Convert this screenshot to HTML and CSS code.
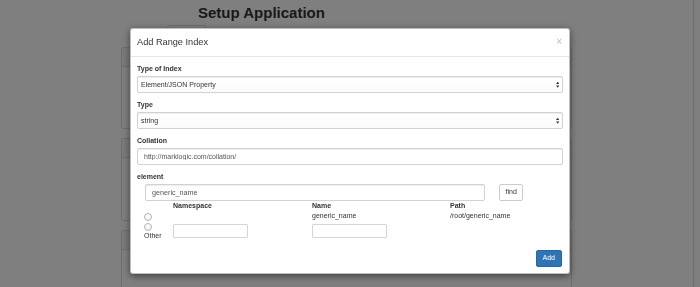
FILE: index.html
```html
<!DOCTYPE html>
<html lang="en">
<head>
<meta charset="utf-8">
<title>Setup Application</title>
<link rel="stylesheet" href="styles.css">
</head>
<body>
<div class="page">
  <div class="main">
    <h2 class="page-title">Setup Application</h2>
    <div class="tab"></div>
    <div class="panels">
      <div class="panel">
        <div class="panel-heading"></div>
        <div class="panel-body p1"></div>
      </div>
      <div class="panel">
        <div class="panel-heading"></div>
        <div class="panel-body p2"></div>
      </div>
      <div class="panel">
        <div class="panel-heading"></div>
        <div class="panel-body p3"></div>
      </div>
    </div>
  </div>
  <div class="rail"></div>
</div>

<div class="backdrop"></div>

<div class="modal" role="dialog" aria-labelledby="modal-title">
  <div class="modal-header">
    <h4 class="modal-title" id="modal-title">Add Range Index</h4>
    <button class="close" type="button" aria-label="Close">×</button>
  </div>
  <div class="modal-body">
    <div class="form-group">
      <label class="control-label">Type of Index</label>
      <div class="select-wrap">
        <select class="form-control select"><option>Element/JSON Property</option></select>
        <svg class="updown" viewBox="0 0 4 8" aria-hidden="true"><path d="M0 3.2 L2 0.6 L4 3.2 Z M0 4.8 L2 7.4 L4 4.8 Z" fill="#333"/></svg>
      </div>
    </div>
    <div class="form-group">
      <label class="control-label">Type</label>
      <div class="select-wrap">
        <select class="form-control select"><option>string</option></select>
        <svg class="updown" viewBox="0 0 4 8" aria-hidden="true"><path d="M0 3.2 L2 0.6 L4 3.2 Z M0 4.8 L2 7.4 L4 4.8 Z" fill="#333"/></svg>
      </div>
    </div>
    <div class="form-group">
      <label class="control-label">Collation</label>
      <input class="form-control" type="text" value="http://marklogic.com/collation/">
    </div>
    <div class="element-group">
      <label class="control-label">element</label>
      <div class="find-row">
        <input class="form-control find-input" type="text" value="generic_name">
        <button class="btn btn-default" type="button">find</button>
      </div>
      <div class="matches">
        <div class="cell"></div>
        <div class="cell th">Namespace</div>
        <div class="cell th">Name</div>
        <div class="cell th">Path</div>

        <div class="cell"><input class="radio" type="radio" name="match"></div>
        <div class="cell"></div>
        <div class="cell">generic_name</div>
        <div class="cell">/root/generic_name</div>

        <div class="cell"><input class="radio" type="radio" name="match"><span class="other">Other</span></div>
        <div class="cell"><input class="small-input" type="text"></div>
        <div class="cell"><input class="small-input" type="text"></div>
        <div class="cell"></div>
      </div>
    </div>
  </div>
  <div class="modal-footer">
    <button class="btn btn-primary" type="button">Add</button>
  </div>
</div>
</body>
</html>
```

FILE: styles.css
```css
* { box-sizing: border-box; }

html, body {
  margin: 0;
  height: 100%;
}

body {
  font-family: "Liberation Sans", Arial, sans-serif;
  color: #333;
  background: #fff;
  overflow: hidden;
}

/* ---------- page underneath ---------- */
.page {
  display: flex;
  height: 287px;
  overflow: hidden;
}

.main {
  width: 693px;
  padding-top: 4px;
  overflow: hidden;
}

.rail {
  flex: 1;
  border-left: 1px solid #ddd;
}

.page-title {
  margin: 0 0 0 198px;
  font-size: 15px;
  line-height: 18px;
  font-weight: bold;
  color: #333;
}

.tab {
  margin: 3px 0 0 167px;
  width: 40px;
  height: 20px;
  border: 1px solid #ddd;
  border-radius: 3px;
}

.panels {
  margin: 2px 0 0 121px;
  width: 451px;
}

.panel {
  border: 1px solid #ddd;
  border-radius: 2px;
  margin-bottom: 9px;
  background: #fff;
}

.panel-heading {
  height: 19px;
  background: #f5f5f5;
  border-bottom: 1px solid #ddd;
}

.p1 { height: 61px; }
.p2 { height: 62px; }
.p3 { height: 60px; }

/* ---------- backdrop + modal ---------- */
.backdrop {
  position: fixed;
  inset: 0;
  background: rgba(0, 0, 0, 0.5);
}

.modal {
  position: absolute;
  left: 130px;
  top: 28px;
  width: 440px;
  background: #fff;
  border: 1px solid rgba(0, 0, 0, 0.25);
  border-radius: 3px;
  box-shadow: 0 2px 7px rgba(0, 0, 0, 0.5);
  font-size: 7px;
  line-height: 10px;
  color: #333;
}

.modal-header {
  display: flex;
  justify-content: space-between;
  align-items: center;
  padding: 7px 7px 7px 6px;
  border-bottom: 1px solid #e5e5e5;
}

.modal-title {
  margin: 0;
  font-size: 9.2px;
  font-weight: normal;
  line-height: 12.5px;
}

.close {
  border: 0;
  background: none;
  padding: 0;
  font: bold 10px/1 "Liberation Sans", Arial, sans-serif;
  color: #000;
  opacity: 0.2;
}

.modal-body {
  padding: 7px 6px 7px 6px;
}

.control-label {
  display: block;
  font-weight: bold;
  margin-bottom: 2.5px;
}

.form-group {
  margin-bottom: 7px;
}

.form-control {
  display: block;
  width: 100%;
  height: 16.5px;
  padding: 0 6px;
  font: 7px/15px "Liberation Sans", Arial, sans-serif;
  color: #555;
  background: #fff;
  border: 1px solid #d2d2d2;
  border-radius: 2px;
  box-shadow: inset 0 1px 1px rgba(0, 0, 0, 0.075);
  outline: none;
}

.find-input {
  font-size: 7.2px;
}

.select-wrap {
  position: relative;
}

.select {
  -webkit-appearance: none;
  appearance: none;
  padding: 0 3px;
  color: #333;
  background: linear-gradient(#fff, #fbfbfb);
}

.updown {
  position: absolute;
  right: 4px;
  top: 4.5px;
  width: 3.5px;
  height: 7.5px;
}

.find-row {
  display: flex;
  align-items: center;
  padding-left: 8px;
}

.find-input {
  width: 340px;
  flex: none;
}

.btn {
  height: 16.5px;
  padding: 0 5.5px;
  font: 7px/10px "Liberation Sans", Arial, sans-serif;
  border: 1px solid #ccc;
  border-radius: 2px;
  background: #fff;
  color: #333;
}

.btn-default {
  margin-left: 14px;
}

.btn-primary {
  background: #2f74b3;
  border-color: #2a67a0;
  color: #fff;
  padding: 0 6px;
}

.matches {
  display: grid;
  grid-template-columns: 29px 139px 138px 1fr;
  padding-left: 7px;
}

.cell {
  line-height: 10px;
}

.th {
  font-weight: bold;
}

.radio {
  -webkit-appearance: none;
  appearance: none;
  display: block;
  width: 8px;
  height: 8px;
  margin: 2px 0 0 0;
  border: 1px solid #b3b3b3;
  border-radius: 50%;
  background: linear-gradient(#fff, #f2f2f2);
}

.other {
  display: block;
  line-height: 10px;
}

.small-input {
  display: block;
  width: 75px;
  height: 14px;
  margin-top: 3px;
  padding: 0 3px;
  font: 7px "Liberation Sans", Arial, sans-serif;
  border: 1px solid #d5d5d5;
  border-radius: 1px;
  background: #fff;
  outline: none;
}

.modal-footer {
  display: flex;
  justify-content: flex-end;
  padding: 2.5px 7px 6px;
}
```
